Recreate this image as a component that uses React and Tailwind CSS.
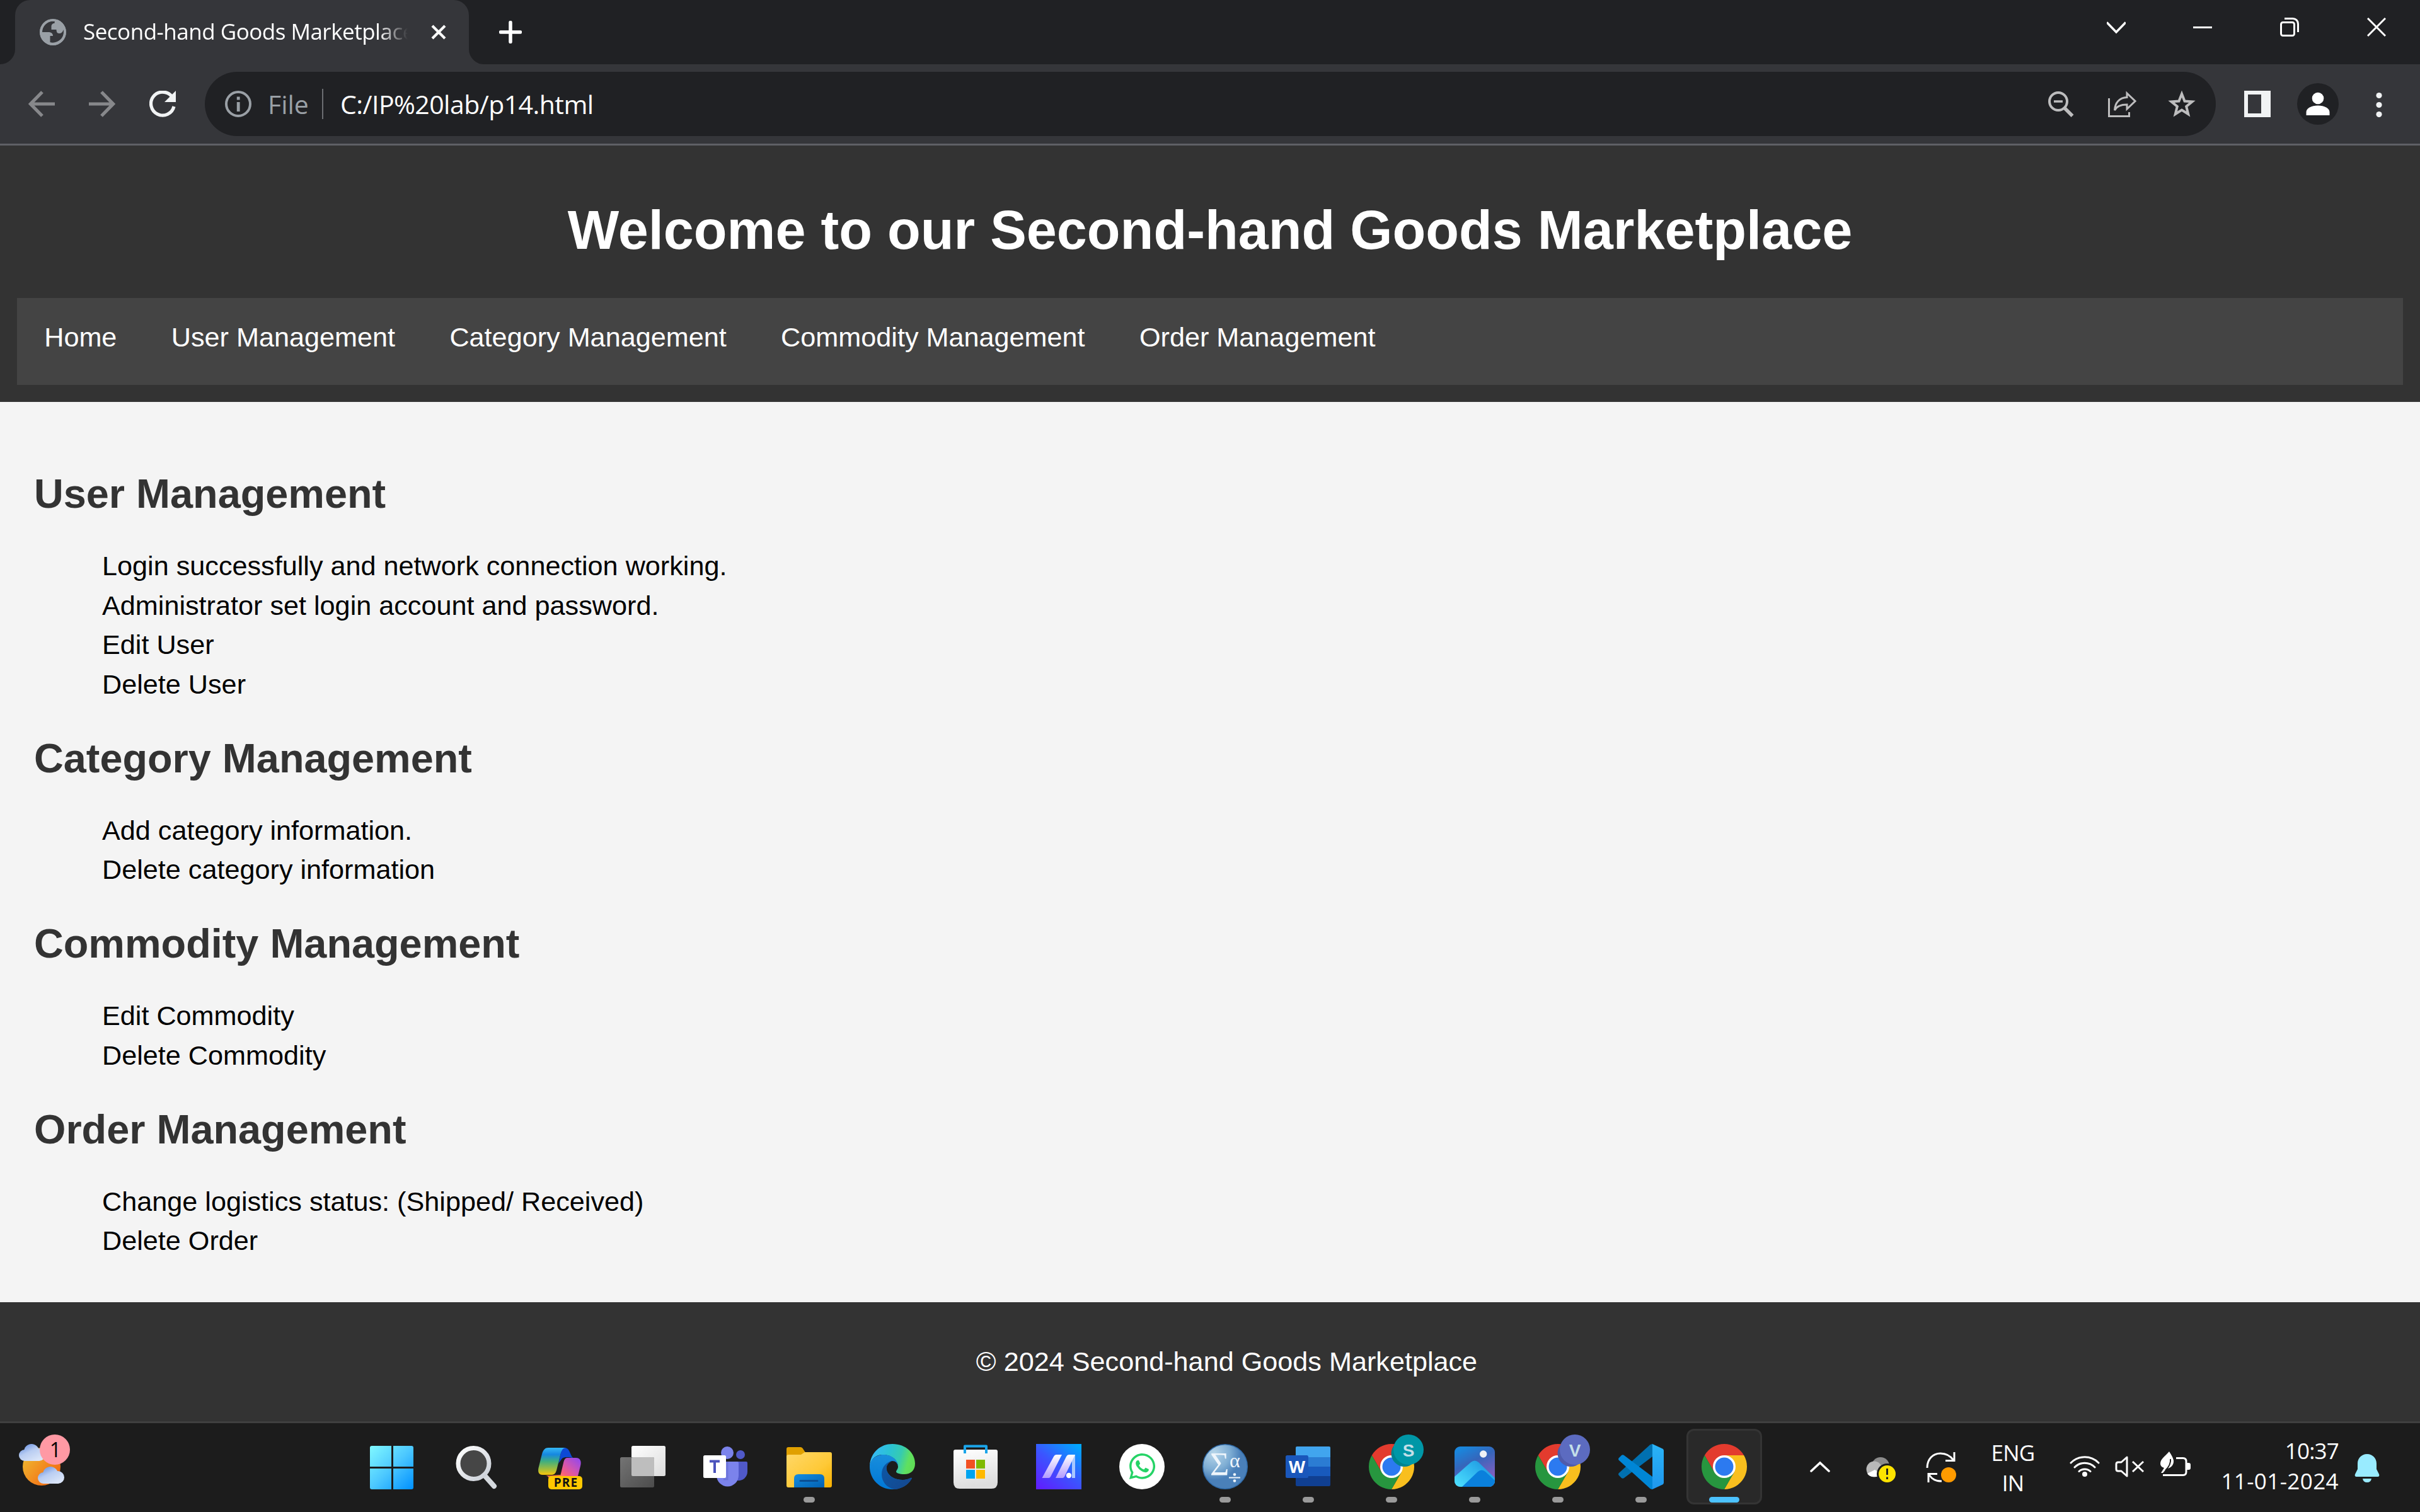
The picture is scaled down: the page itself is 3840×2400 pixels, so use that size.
import React from "react";
import { FaWhatsapp } from "react-icons/fa";

const navItems = ["Home", "User Management", "Category Management", "Commodity Management", "Order Management"];

const sections = [
  {
    title: "User Management",
    items: [
      "Login successfully and network connection working.",
      "Administrator set login account and password.",
      "Edit User",
      "Delete User",
    ],
  },
  { title: "Category Management", items: ["Add category information.", "Delete category information"] },
  { title: "Commodity Management", items: ["Edit Commodity", "Delete Commodity"] },
  { title: "Order Management", items: ["Change logistics status: (Shipped/ Received)", "Delete Order"] },
];

/* ---------- browser chrome ---------- */

function TabStrip() {
  return (
    <div className="flex h-[102px] bg-[#202124]">
      <div className="flex h-6 w-6 self-end bg-[#35363a]">
        <div className="h-6 w-6 rounded-br-[24px] bg-[#202124]" />
      </div>
      <div className="flex h-[102px] w-[720px] items-center rounded-t-[24px] bg-[#35363a] pl-[39px]">
        <svg className="h-[42px] w-[42px] shrink-0" viewBox="0 0 42 42">
          <circle cx="21" cy="21" r="21" fill="#9aa0a6" />
          <path
            d="M24 4C14 2 4 10 4 21h10c4 0 7 2 7 6h-5v10c11 3 22-5 22-16 0-1 0-3-.5-4-1 4-3 6-7 6-3 0-4-3-4-6h-8v-5c0-3 2-5 5-5 0-1 0-2 .5-3z"
            fill="#35363a"
            fillRule="evenodd"
          />
          <path d="M4.500 24h9c2 0 3 1 3 3v10C10 35 5.500 30 4.500 24z" fill="#9aa0a6" />
          <circle cx="21" cy="21" r="19" fill="none" stroke="#9aa0a6" strokeWidth="3.500" />
        </svg>
        <div className="mb-[2px] ml-[27px] w-[515px] overflow-hidden whitespace-nowrap font-['Open_Sans',sans-serif] text-[35px] leading-[48px] tracking-[-0.5px] text-white [mask-image:linear-gradient(to_right,black_91%,transparent_100%)]">
          Second-hand Goods Marketplace
        </div>
        <svg className="ml-[37px] h-6 w-6 shrink-0" viewBox="0 0 24 24">
          <path d="M2 2l20 20M22 2L2 22" stroke="#fff" strokeWidth="4.200" />
        </svg>
      </div>
      <div className="flex h-6 w-6 self-end bg-[#35363a]">
        <div className="h-6 w-6 rounded-bl-[24px] bg-[#202124]" />
      </div>
      <svg className="ml-6 mt-[33px] h-9 w-9" viewBox="0 0 36 36">
        <path d="M18 2.500v31M2.500 18h31" stroke="#fff" strokeWidth="5.500" strokeLinecap="round" />
      </svg>
      <svg className="ml-auto mt-[34px] h-5 w-[30px]" viewBox="0 0 30 20">
        <path d="M0 1.500l15 15.500L30 1.500" fill="none" stroke="#fff" strokeWidth="3.500" />
      </svg>
      <div className="ml-[107px] mt-[42px] h-[3px] w-[30px] bg-white" />
      <svg className="ml-[108px] mt-7 h-[30px] w-[30px]" viewBox="0 0 30 30">
        <rect x="1.500" y="7.500" width="21" height="21" rx="3" fill="none" stroke="#fff" strokeWidth="3" />
        <path d="M7 1.500h13c5 0 8.500 3.500 8.500 8.500v13" fill="none" stroke="#fff" strokeWidth="3" />
      </svg>
      <svg className="ml-[108px] mr-[54px] mt-7 h-[30px] w-[30px]" viewBox="0 0 30 30">
        <path d="M1 1l28 28M29 1L1 29" stroke="#fff" strokeWidth="3" />
      </svg>
    </div>
  );
}

function AddressBar() {
  return (
    <div className="flex h-[129px] items-start border-b-[3px] border-[#5f6066] bg-[#35363a] pt-3">
      <div className="flex h-[102px] w-[325px] items-center gap-[54px] pl-[45px]">
        <svg className="h-[42px] w-[42px]" viewBox="0 0 42 42">
          <path d="M42 21H4M22 2L3.500 21 22 40" fill="none" stroke="#87888b" strokeWidth="5.200" />
        </svg>
        <svg className="h-[42px] w-[42px]" viewBox="0 0 42 42">
          <path d="M0 21h38M20 2l18.500 19L20 40" fill="none" stroke="#87888b" strokeWidth="5.200" />
        </svg>
        <svg className="h-[42px] w-[42px]" viewBox="0 0 42 42">
          <path d="M35.500 9A18.500 18.500 0 1 0 39 25" fill="none" stroke="#f1f3f4" strokeWidth="5.200" />
          <path d="M42 0v18H24z" fill="#f1f3f4" />
        </svg>
      </div>
      <div className="flex h-[102px] w-[3191px] items-center rounded-full bg-[#202124] pl-8">
        <svg className="h-[42px] w-[42px]" viewBox="0 0 42 42">
          <circle cx="21" cy="21" r="19" fill="none" stroke="#9aa0a6" strokeWidth="4" />
          <path d="M18.800 18h4.800v15h-4.800zM18.800 9.500h4.800v5h-4.800z" fill="#9aa0a6" />
        </svg>
        <span className="ml-[26px] w-[86px] whitespace-nowrap font-['Open_Sans',sans-serif] text-[41px] leading-[54px] text-[#9aa0a6]">
          File
        </span>
        <span className="h-12 w-[2px] bg-[#6b6e72]" />
        <span className="ml-[27px] whitespace-nowrap font-['Open_Sans',sans-serif] text-[41px] leading-[54px] tracking-[-0.55px] text-white">
          C:/IP%20lab/p14.html
        </span>
        <div className="ml-auto flex items-center pr-[32px]">
          <svg className="h-[42px] w-[42px]" viewBox="0 0 42 42">
            <circle cx="16" cy="17" r="14" fill="none" stroke="#bdbdbe" strokeWidth="4" />
            <path d="M9 17h14" stroke="#bdbdbe" strokeWidth="3.500" />
            <path d="M25.500 27l13 13" stroke="#bdbdbe" strokeWidth="5.500" />
          </svg>
          <svg className="ml-[53px] h-[42px] w-[45px]" viewBox="0 0 45 42">
            <path
              d="M1.500 12v28.500h32V34M30 4l13 12.500L30 29v-7C21 22 14 24 10.500 31 11 19 18 11 30 10.500z"
              fill="none"
              stroke="#bdbdbe"
              strokeWidth="3"
            />
          </svg>
          <svg className="ml-[50px] h-[44px] w-[44px]" viewBox="0 0 44 44">
            <path
              d="M22 6l4.500 11.500 12 .8-9.300 7.700 3 12L22 31.500 11.800 38l3-12-9.300-7.700 12-.8z"
              fill="none"
              stroke="#bdbdbe"
              strokeWidth="4"
            />
          </svg>
        </div>
      </div>
      <div className="flex h-[102px] items-center">
        <svg className="ml-[45px] h-[42px] w-[42px]" viewBox="0 0 42 42">
          <path d="M0 0h42v42H0zM6 6v30h21V6z" fill="#f1f3f4" fillRule="evenodd" />
        </svg>
        <svg className="ml-[42px] h-[66px] w-[66px]" viewBox="0 0 66 66">
          <circle cx="33" cy="33" r="33" fill="#202124" />
          <circle cx="33" cy="24" r="9.300" fill="#fff" />
          <path d="M14.500 51v-5c0-6 8-10.500 18.500-10.500S51.500 40 51.500 46v5z" fill="#fff" />
        </svg>
        <svg className="ml-[59px] h-[42px] w-[10px]" viewBox="0 0 10 42">
          <circle cx="5" cy="7.500" r="4.600" fill="#f1f3f4" />
          <circle cx="5" cy="22.500" r="4.600" fill="#f1f3f4" />
          <circle cx="5" cy="37.500" r="4.600" fill="#f1f3f4" />
        </svg>
      </div>
    </div>
  );
}

/* ---------- page ---------- */

function Page() {
  return (
    <div className="h-[2025px] bg-[#f4f4f4] font-['Liberation_Sans',Arial,sans-serif] text-[43.2px] leading-[49px] text-black">
      <header className="h-[407px] bg-[#333333] px-[27px] pt-[85px] text-center text-white">
        <h1 className="h-[99px] text-[86.4px] font-bold leading-[99px]">Welcome to our Second-hand Goods Marketplace</h1>
        <nav className="mt-[58px] flex h-[138px] bg-[#444444]">
          {navItems.map((n) => (
            <a key={n} className="block px-[43.2px] pt-[38px]">
              {n}
            </a>
          ))}
        </nav>
      </header>
      <main className="h-[1429px] px-[54px] pt-[109px]">
        {sections.map((s) => (
          <section key={s.title} className="mb-[56px]">
            <h2 className="h-[73px] text-[64.8px] font-bold leading-[73px] text-[#333333]">{s.title}</h2>
            <ul className="mt-[54px] flex flex-col gap-[13.5px] pl-[108px]">
              {s.items.map((i) => (
                <li key={i}>{i}</li>
              ))}
            </ul>
          </section>
        ))}
      </main>
      <footer className="flex h-[189px] justify-center bg-[#333333] pl-[53px] pt-[70px] text-white">
        © 2024 Second-hand Goods Marketplace
      </footer>
    </div>
  );
}

/* ---------- taskbar icons (72 × 72 grid) ---------- */

const Grad = ({ id, stops, x1 = 0, y1 = 0, x2 = 1, y2 = 1 }) => (
  <linearGradient id={id} x1={x1} y1={y1} x2={x2} y2={y2}>
    {stops.map(([o, c]) => (
      <stop key={o} offset={o} stopColor={c} />
    ))}
  </linearGradient>
);

const WindowsLogo = () => (
  <>
    <linearGradient id="win" gradientUnits="userSpaceOnUse" x1="0" y1="3" x2="68" y2="72">
      <stop offset="0" stopColor="#80f8ff" />
      <stop offset="0.500" stopColor="#4cc8ff" />
      <stop offset="1" stopColor="#0090ff" />
    </linearGradient>
    <path d="M2 3h31v33H-1V6q0-3 3-3zM36 3h29q3 0 3 3v30H36zM-1 39h34v33H2q-3 0-3-3zM36 39h32v30q0 3-3 3H36z" fill="url(#win)" />
  </>
);

const SearchIcon = () => (
  <>
    <Grad id="srch" stops={[[0, "#ffffff"], [1, "#c9ced6"]]} />
    <path d="M48 49l16 18" stroke="#d5d9de" strokeWidth="8" strokeLinecap="round" />
    <circle cx="31.500" cy="31" r="24.500" fill="#464646" stroke="url(#srch)" strokeWidth="7" />
  </>
);

const Copilot = () => (
  <>
    <Grad id="cpA" x2="0" stops={[[0, "#35b8f5"], [0.25, "#1687e0"], [0.5, "#3fae80"], [0.8, "#a5bd3a"], [1, "#fbc50b"]]} />
    <Grad id="cpB" x1="1" x2="0.1" stops={[[0, "#8b46f5"], [0.5, "#d255b0"], [0.8, "#f85f7c"], [1, "#ff9a4a"]]} />
    <path d="M40 6h4c9 0 9 15 14 16-8-1-14-2-18 1l-6 8z" fill="#0d49d6" />
    <path d="M18 6h28c-5 0-7 4-9 12l-6 24c-2 6-4 7-9 7H9c-7 0-8-6-6-13l5-20C10 9 13 6 18 6z" fill="url(#cpA)" />
    <path d="M13 50c8 0 11 0 24-1v6H22c-5 0-3-5-9-5z" fill="#f5743d" />
    <path d="M48 22h14c7 0 9 6 7 13l-5 20H34c2-2 3-4 4-8l4-17c1-5 3-8 6-8z" fill="url(#cpB)" />
    <rect x="18" y="51" width="54" height="21" rx="5" fill="#ffc800" />
    <text x="46" y="68" textAnchor="middle" className="font-['Open_Sans',sans-serif] text-[19px] font-bold" letterSpacing="1.200" fill="#111">
      PRE
    </text>
  </>
);

const TaskView = () => (
  <>
    <Grad id="tvA" stops={[[0, "#ffffff"], [1, "#dcdcdc"]]} />
    <Grad id="tvB" stops={[[0, "#747474"], [1, "#4c4c4c"]]} />
    <rect x="18" y="3" width="54" height="48" rx="2.500" fill="url(#tvA)" />
    <rect x="0" y="21" width="54" height="48" rx="2.500" fill="url(#tvB)" />
    <path d="M18 23q0-2 2-2h32q2 0 2 2v28H20q-2 0-2-2z" fill="#bebebe" />
  </>
);

const Teams = () => (
  <>
    <circle cx="38" cy="14" r="10" fill="#7b83eb" />
    <circle cx="59" cy="17" r="7" fill="#5059c9" />
    <path d="M54 28h14q2 0 2 2v14a14 14 0 0 1-16 14z" fill="#5059c9" />
    <path d="M21 28h33q2 0 2 2v20a17.500 17.500 0 0 1-35 0z" fill="#7b83eb" />
    <path d="M32 56h6V28" fill="none" stroke="#5a62c4" strokeWidth="3" opacity="0.400" />
    <rect x="0" y="18" width="36" height="36" rx="2.500" fill="#fff" />
    <path d="M10 27.500h16M18 27v19" stroke="#4b53bc" strokeWidth="4" />
  </>
);

const Explorer = () => (
  <>
    <Grad id="fe" stops={[[0, "#ffd869"], [0.6, "#fec937"], [1, "#f8b000"]]} />
    <Grad id="feB" stops={[[0, "#168ee0"], [1, "#0160b2"]]} />
    <path d="M0 8q0-3 3-3h19q3 0 5 4l4 6v8H0z" fill="#e0a000" />
    <path d="M0 20q0-3 3-3h20l6-4h40q3 0 3 3v50q0 3-3 3H3q-3 0-3-3z" fill="url(#fe)" />
    <path d="M12 69V55q0-7 7-7h34q7 0 7 7v14z" fill="url(#feB)" />
    <path d="M22 58.500h27" stroke="#0a4f94" strokeWidth="3" strokeLinecap="round" />
  </>
);

const Edge = () => (
  <>
    <Grad id="egA" x1="0" y1="0.4" x2="1" y2="0.6" stops={[[0, "#36b8f8"], [0.4, "#2bc3d2"], [0.65, "#36cbb0"], [0.85, "#5fe060"], [1, "#60dc55"]]} />
    <Grad id="egB" x1="0.5" y1="0" x2="0.4" y2="1" stops={[[0, "#1a8fdc"], [1, "#0078d7"]]} />
    <Grad id="egC" stops={[[0, "#0c59a8"], [1, "#15468c"]]} />
    <path d="M0 34C2 13 17 0 36 0c22 0 36 15 36 31 0 11-7 17-17 17-8 0-13-2-13-4 0-2 3-4 3-8 0-10-10-19-24-19C9 17 3 24 0 34z" fill="url(#egA)" />
    <path d="M0 36c0-11 10-19 22-19 14 0 23 9 23 19-1-6-4-9-9-9-6 0-11 7-9 15 3 10 14 15 25 15 7 0 10-2 13-3 2-1 2 1 1 2-6 10-17 16-30 16C16 72 0 56 0 36z" fill="url(#egB)" />
    <path d="M36 27c-9 1-17 9-17 21 0 12 8 22 21 24 11-1 21-7 26.500-16.500.7-1.500-.5-2-1.500-1.500-4 2-8 3-13 3-11 0-22-5-25-15-2-7 3-13 9-15z" fill="url(#egC)" />
  </>
);

const Store = () => (
  <>
    <Grad id="st" x2="0.2" stops={[[0, "#ffffff"], [1, "#dddddd"]]} />
    <path d="M1 12q0-3 3-3h64q3 0 3 3v49q0 10-10 10H11Q1 71 1 61z" fill="url(#st)" />
    <path d="M19 15V3.500h34V15" fill="none" stroke="#1ba5ea" strokeWidth="4" strokeLinejoin="round" />
    <path d="M21 25h14v14H21z" fill="#f25022" />
    <path d="M37 25h14v14H37z" fill="#7fba00" />
    <path d="M21 41h14v14H21z" fill="#00a4ef" />
    <path d="M37 41h14v14H37z" fill="#ffb900" />
  </>
);

const MyAsus = () => (
  <>
    <Grad id="ma" x1="0.1" y1="1" x2="0.9" y2="0" stops={[[0, "#5f1fff"], [0.5, "#3b55ff"], [1, "#00a8ff"]]} />
    <Grad id="maW" x2="0" stops={[[0, "#ffffff"], [1, "#b39cff"]]} />
    <path d="M0 0h72v72H0z" fill="url(#ma)" />
    <path d="M57 20l5-3v37h-5z" fill="#a9c8ff" />
    <path d="M28 20q1.500-3 4-3h9L23 52q-1 2-3 2H9.500z" fill="url(#maW)" />
    <path d="M48 20q1.500-3 4-3h10L45 52q-1 2-3 2H31z" fill="url(#maW)" />
    <circle cx="52" cy="50" r="4.200" fill="#fff" />
  </>
);

const WhatsApp = () => (
  <>
    <circle cx="36" cy="36" r="36" fill="#fff" />
    <FaWhatsapp x="13" y="12" size={47} color="#25d366" />
  </>
);

const MathApp = () => (
  <>
    <radialGradient id="mt" cx="0.25" cy="0.2" r="0.6">
      <stop offset="0" stopColor="#b7d6ea" />
      <stop offset="0.600" stopColor="#7faed4" />
      <stop offset="1" stopColor="#4a80b9" />
    </radialGradient>
    <circle cx="36" cy="36" r="35.300" fill="url(#mt)" stroke="#2f6aa8" strokeWidth="1.500" />
    <g className="font-['Liberation_Serif',serif]" fill="#eef5fb">
      <text x="12" y="50" className="text-[52px]">Σ</text>
      <text x="43" y="37" className="text-[32px]">α</text>
    </g>
    <path d="M42 53.500h18" stroke="#eef5fb" strokeWidth="2" />
    <circle cx="51" cy="48.500" r="2.300" fill="#eef5fb" />
    <circle cx="51" cy="58.500" r="2.300" fill="#eef5fb" />
  </>
);

const Word = () => (
  <>
    <path d="M16 21V6q0-2 2-2h51q2 0 2 2v15z" fill="#41a5ee" />
    <path d="M16 21h55v15H16z" fill="#2b7cd3" />
    <path d="M16 36h55v15H16z" fill="#185abd" />
    <path d="M16 51h55v14q0 2-2 2H18q-2 0-2-2z" fill="#103f91" />
    <rect x="0" y="18" width="36" height="36" rx="2.500" fill="#1a57bb" />
    <text x="18" y="46" textAnchor="middle" className="font-['Open_Sans',sans-serif] text-[27px] font-bold" fill="#fff">
      W
    </text>
  </>
);

function Chrome({ letter, color, back }) {
  return (
    <>
      <path d="M4.800 18A36 36 0 0 1 67.200 18L36 19 20.400 45z" fill="#e33b2e" />
      <path d="M67.200 18A36 36 0 0 1 36 72l15.600-27L36 36V18z" fill="#f9bf1e" />
      <path d="M36 72A36 36 0 0 1 4.800 18l15.600 27L36 54l15.600-9z" fill="#27963f" />
      <circle cx="36" cy="36" r="18" fill="#fff" />
      <circle cx="36" cy="36" r="14.500" fill="#2c7af0" />
      {letter && (
        <>
          <circle cx="56.500" cy="15" r="21" fill={back} />
          <circle cx="63" cy="9" r="24" fill={color} />
          <text x="63" y="19.500" textAnchor="middle" className="font-['Liberation_Sans',sans-serif] text-[28px] font-bold" fill="#c3dfe8">
            {letter}
          </text>
        </>
      )}
    </>
  );
}

const Photos = () => (
  <>
    <Grad id="ph" x1="0.3" x2="0.8" stops={[[0, "#1a86dc"], [0.35, "#3566bb"], [1, "#9a5cc0"]]} />
    <Grad id="phC" x1="0" y1="1" x2="1" y2="0.2" stops={[[0, "#4fe3ff"], [0.6, "#2fb4ee"], [1, "#1b93de"]]} />
    <clipPath id="phClip">
      <rect x="4" y="4" width="64" height="64" rx="9" />
    </clipPath>
    <g clipPath="url(#phClip)">
      <path d="M4 4h64v64H4z" fill="url(#ph)" />
      <path d="M4 52l26-23q6-5 12 0l26 25v14H4z" fill="url(#phC)" />
      <path d="M16 68l25-24q6-5 12 0l15 14v10z" fill="#0a80dc" />
    </g>
    <circle cx="49.700" cy="16" r="5.700" fill="#eef1f5" />
  </>
);

const VsCode = () => (
  <>
    <Grad id="vs" x2="0" stops={[[0, "#2ab4f7"], [1, "#1f97ee"]]} />
    <path d="M50 1.500Q52 0 54 0v20L9 54q-2 1.500-4 0l-4-4q-2-2 0-4z" fill="#0070b0" />
    <path d="M50 70.500Q52 72 54 72V52L9 18q-2-1.500-4 0l-4 4q-2 2 0 4z" fill="#0086d6" />
    <path d="M54 0l16 7.500q2 1 2 3v51q0 2-2 3L54 72z" fill="url(#vs)" />
  </>
);

const apps = [
  { icon: <WindowsLogo /> },
  { icon: <SearchIcon /> },
  { icon: <Copilot /> },
  { icon: <TaskView /> },
  { icon: <Teams /> },
  { icon: <Explorer />, open: true },
  { icon: <Edge /> },
  { icon: <Store /> },
  { icon: <MyAsus /> },
  { icon: <WhatsApp /> },
  { icon: <MathApp />, open: true },
  { icon: <Word />, open: true },
  { icon: <Chrome letter="S" color="#0097a7" back="#00838f" />, open: true },
  { icon: <Photos />, open: true },
  { icon: <Chrome letter="V" color="#5c6bc0" back="#4f5bab" />, open: true },
  { icon: <VsCode />, open: true },
  { icon: <Chrome />, active: true },
];

const Cloud = ({ x, y }) => (
  <g transform={`translate(${x} ${y})`} fill="url(#cloud)">
    <circle cx="20" cy="12" r="12" />
    <circle cx="32" cy="17" r="10" />
    <circle cx="9" cy="18" r="9" />
    <path d="M9 15h24v12H9z" />
  </g>
);

function Weather() {
  return (
    <svg className="ml-[30px] mt-[18px] h-[84px] w-[84px]" viewBox="30 2277 84 84">
      <Grad id="sun" x1="0" y1="0.2" stops={[[0, "#f0bb30"], [0.6, "#f2801c"], [1, "#f0600c"]]} />
      <linearGradient id="cloud" gradientUnits="userSpaceOnUse" x1="10" y1="0" x2="24" y2="28">
        <stop offset="0" stopColor="#6b92e0" />
        <stop offset="0.450" stopColor="#b9cdf2" />
        <stop offset="1" stopColor="#d9e4f8" />
      </linearGradient>
      <circle cx="66" cy="2328" r="30" fill="url(#sun)" />
      <Cloud x={30} y={2292} />
      <Cloud x={60} y={2328} />
      <circle cx="87" cy="2301" r="24" fill="#ff99a4" />
      <text x="88" y="2313" textAnchor="middle" className="font-['Open_Sans',sans-serif] text-[32px]" fill="#000">
        1
      </text>
    </svg>
  );
}

function Tray() {
  return (
    <div className="ml-[70px] flex h-[141px] items-start font-['Open_Sans',sans-serif] text-[35px] leading-[48px] tracking-[-0.8px] text-white">
      <svg className="mt-[60px] h-5 w-8" viewBox="2872 2318 32 20">
        <path d="M2874 2334l14-13 14 13" fill="none" stroke="#fff" strokeWidth="3.500" strokeLinecap="round" />
      </svg>
      <svg className="ml-14 mt-[52px] h-[44px] w-12" viewBox="2960 2310 48 44">
        <circle cx="2984" cy="2326" r="14" fill="#8b8b8b" />
        <circle cx="2974" cy="2331" r="12.500" fill="#b9b9b9" />
        <path d="M2963 2338l12-6 16 11h-18q-7 0-10-5z" fill="#fff" />
        <circle cx="2994.500" cy="2338.500" r="16.500" fill="#1c1c1c" />
        <circle cx="2994.500" cy="2338.500" r="13.500" fill="#fde300" />
        <path d="M2994.500 2330v10M2994.500 2343.500v3.500" stroke="#222" strokeWidth="3" />
      </svg>
      <svg className="ml-12 mt-[44px] h-[50px] w-12" viewBox="3056 2302 48 50">
        <path d="M3058 2329c0-14 9-23 21-23 9 0 16 4 21 11M3101 2304v13.500h-14M3060 2352v-13.500h14M3061 2340c5 7 10 10 20 10" fill="none" stroke="#fff" strokeWidth="3" />
        <circle cx="3092" cy="2340" r="12" fill="#ff9b00" />
      </svg>
      <div className="ml-[45px] mt-[23px] w-[90px] text-center">
        <div>ENG</div>
        <div>IN</div>
      </div>
      <svg className="ml-[45px] mt-[50px] h-[36px] w-12" viewBox="3284 2309 48 36">
        <g fill="none" stroke="#fff" strokeWidth="3" strokeLinecap="round">
          <path d="M3286 2322a31 31 0 0 1 44 0M3292 2329a22.500 22.500 0 0 1 32 0M3299 2335.500a13 13 0 0 1 18 0" />
        </g>
        <circle cx="3308" cy="2340" r="4" fill="#fff" />
      </svg>
      <svg className="ml-6 mt-[51px] h-[36px] w-12" viewBox="3356 2310 48 36">
        <g fill="none" stroke="#fff" strokeWidth="3" strokeLinejoin="round">
          <path d="M3375 2313v30l-9-8h-5q-3 0-3-3v-8q0-3 3-3h5z" />
          <path d="M3384 2320l17 16M3401 2320l-17 16" />
        </g>
      </svg>
      <svg className="ml-[23px] mt-[44px] h-[42px] w-[50px]" viewBox="3427 2303 50 42">
        <path d="M3453 2314.500h11q5 0 5 5v17q0 5-5 5h-32" fill="none" stroke="#fff" strokeWidth="3" />
        <path d="M3470 2322h3q3 0 3 3v5q0 3-3 3h-3z" fill="#fff" />
        <path d="M3442 2304c-6 7-14 12-14 19 0 4 3 6 6 7l-5 8h3l6-7c6 0 12-6 11-13-1-5-4-9-7-14z" fill="#fff" />
        <path d="M3444 2316c1 7-2 12-8 18" fill="none" stroke="#1c1c1c" strokeWidth="2" />
      </svg>
      <div className="ml-[36px] mt-5 w-[198px] whitespace-nowrap text-right">
        <div>10:37</div>
        <div className="tracking-[0.4px]">11-01-2024</div>
      </div>
      <svg className="ml-[25px] mt-[48px] h-[46px] w-10" viewBox="3736 2306 40 46">
        <path d="M3756 2307c-9 0-15 7-15 15v9l-4 8c-1 2 0 4 2 4h34c2 0 3-2 2-4l-4-8v-9c0-8-6-15-15-15z" fill="#99ebff" />
        <path d="M3749 2346h14q-1 6-7 6t-7-6z" fill="#99ebff" />
      </svg>
    </div>
  );
}

function Taskbar() {
  return (
    <div className="flex h-[144px] border-t-[3px] border-[#404040] bg-[#1c1c1c]">
      <div className="w-[558px]">
        <Weather />
      </div>
      <div className="flex">
        {apps.map((a, i) => (
          <div key={i} className="flex w-[132px] justify-center pt-[9px]">
            <div
              className={
                a.active
                  ? "flex h-[120px] w-[120px] flex-col items-center rounded-[12px] border-[3px] border-[#343434] bg-[#292929] pt-[21px]"
                  : "flex h-[120px] w-[120px] flex-col items-center pt-6"
              }
            >
              <svg className="h-[72px] w-[72px] shrink-0 overflow-visible" viewBox="0 0 72 72">
                {a.icon}
              </svg>
              {a.open && <div className="mt-3 h-[9px] w-[18px] rounded-full bg-[#9a9a9a]" />}
              {a.active && <div className="mt-3 h-[9px] w-12 shrink-0 rounded-full bg-[#4cc2ff]" />}
            </div>
          </div>
        ))}
      </div>
      <Tray />
    </div>
  );
}

export default function App() {
  return (
    <div className="flex h-[2400px] w-[3840px] flex-col overflow-hidden">
      <TabStrip />
      <AddressBar />
      <Page />
      <Taskbar />
    </div>
  );
}
